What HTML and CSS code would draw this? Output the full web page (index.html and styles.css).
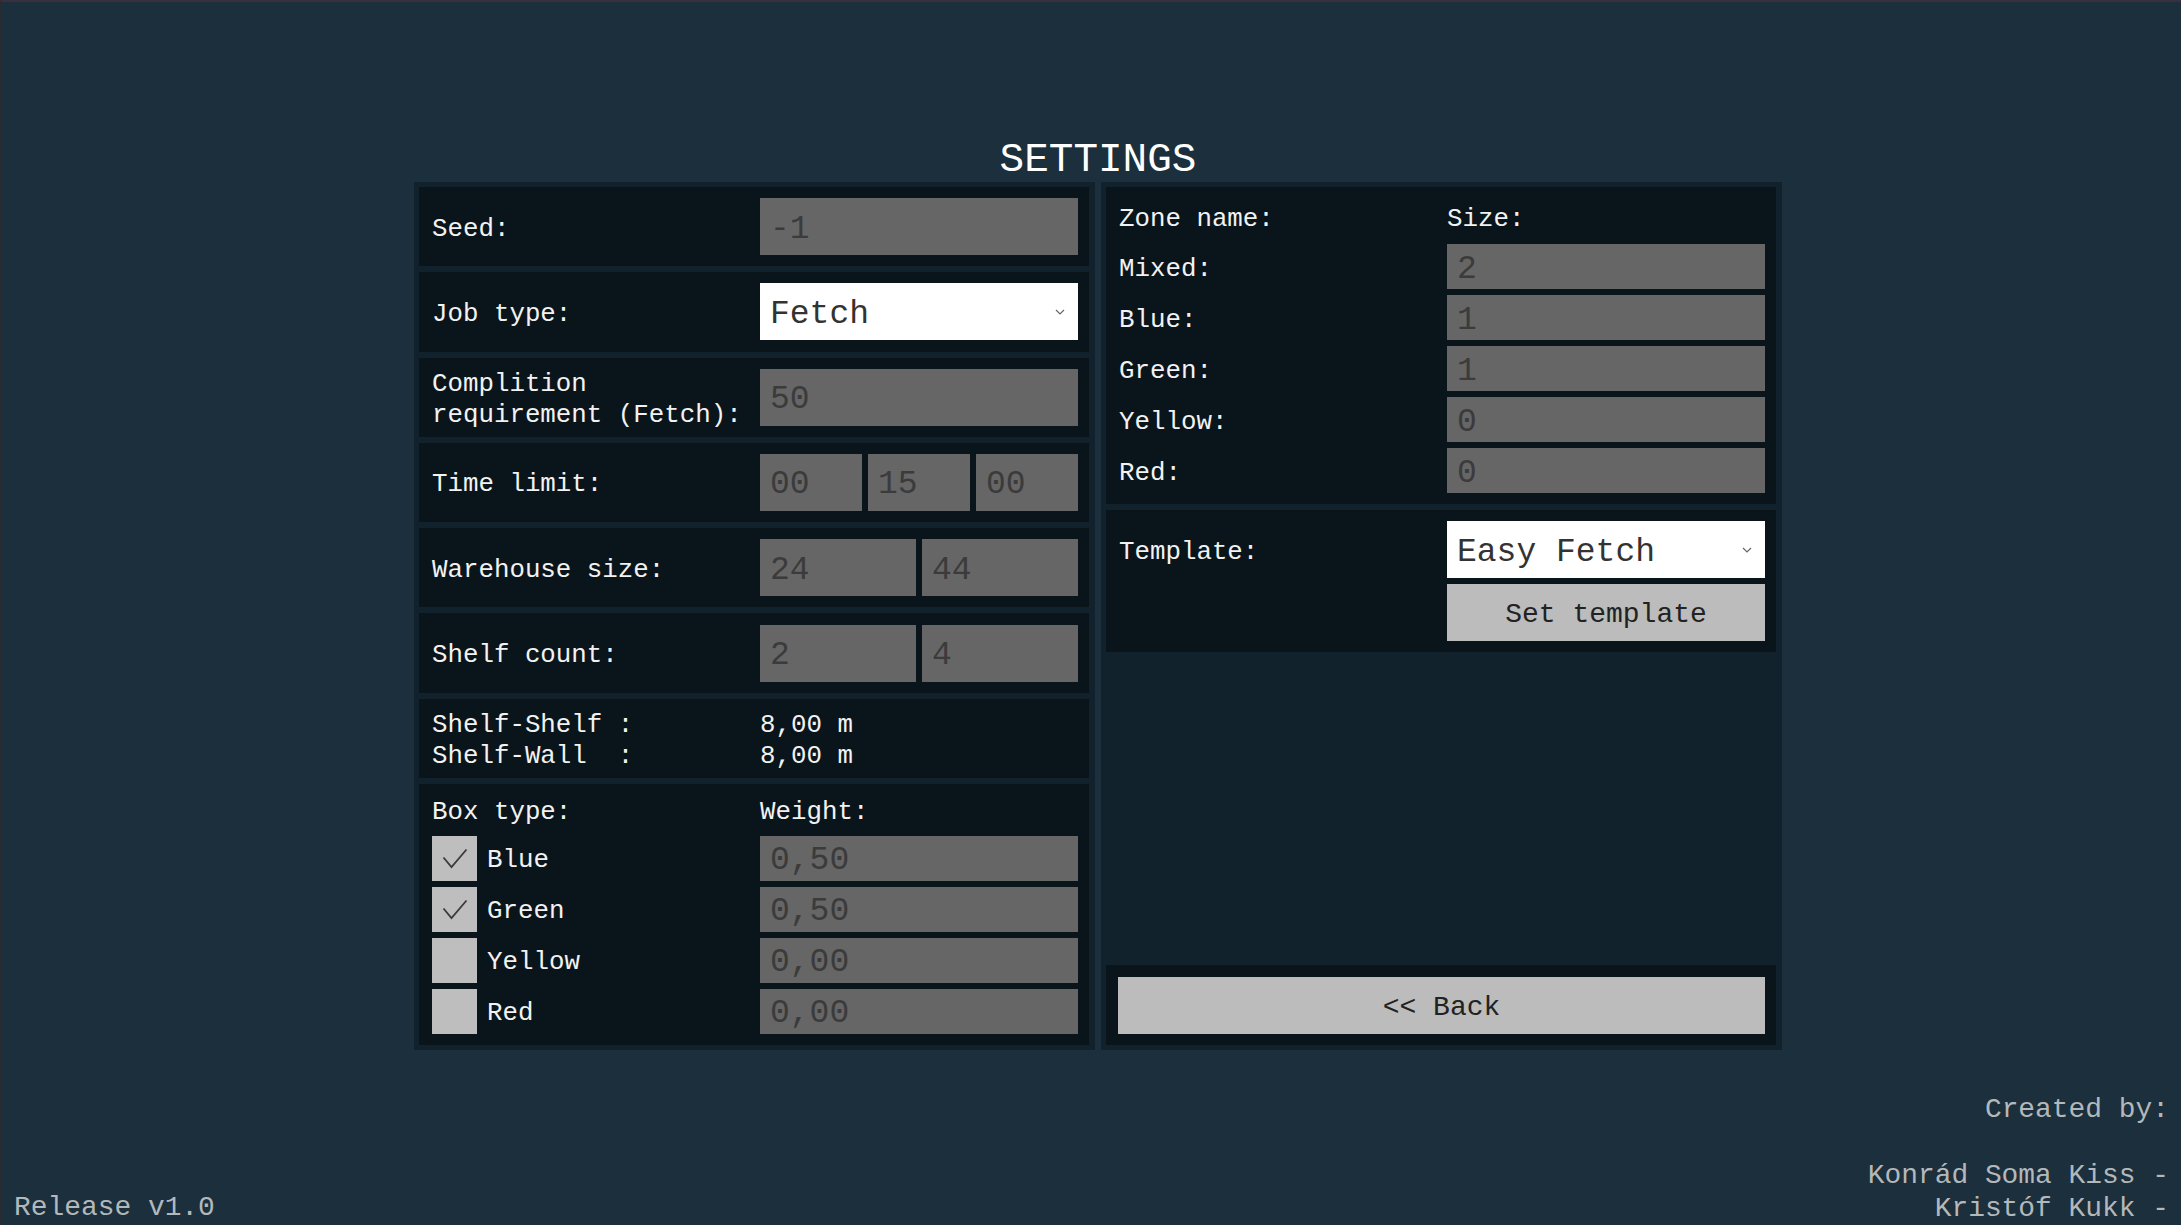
FILE: index.html
```html
<!DOCTYPE html>
<html lang="en">
<head>
<meta charset="utf-8">
<title>Settings</title>
<link rel="stylesheet" href="styles.css">
</head>
<body>
<div class="app">
  <div class="settings">
    <h1 class="title">SETTINGS</h1>
    <div class="panels">
      <section class="panel">
        <div class="row">
          <div class="label">Seed:</div>
          <div class="field">-1</div>
        </div>
        <div class="row">
          <div class="label">Job type:</div>
          <div class="select"><span>Fetch</span><svg class="chev" viewBox="0 0 10 6" width="10" height="6"><path d="M1 1 L5 5 L9 1"/></svg></div>
        </div>
        <div class="row">
          <div class="label">Complition
requirement (Fetch):</div>
          <div class="field">50</div>
        </div>
        <div class="row">
          <div class="label">Time limit:</div>
          <div class="fields">
            <div class="field">00</div>
            <div class="field">15</div>
            <div class="field">00</div>
          </div>
        </div>
        <div class="row">
          <div class="label">Warehouse size:</div>
          <div class="fields">
            <div class="field">24</div>
            <div class="field">44</div>
          </div>
        </div>
        <div class="row">
          <div class="label">Shelf count:</div>
          <div class="fields">
            <div class="field">2</div>
            <div class="field">4</div>
          </div>
        </div>
        <div class="row">
          <div class="label">Shelf-Shelf :
Shelf-Wall  :</div>
          <div class="label">8,00 m
8,00 m</div>
        </div>
        <div class="row-box">
          <div class="label">Box type:</div>
          <div class="label">Weight:</div>
          <div class="check"><div class="box"><svg viewBox="0 0 45 45" width="45" height="45"><path d="M11.5 21.5 L19.5 31 L34.5 13.5"/></svg></div><span class="label">Blue</span></div>
          <div class="field">0,50</div>
          <div class="check"><div class="box"><svg viewBox="0 0 45 45" width="45" height="45"><path d="M11.5 21.5 L19.5 31 L34.5 13.5"/></svg></div><span class="label">Green</span></div>
          <div class="field">0,50</div>
          <div class="check"><div class="box"></div><span class="label">Yellow</span></div>
          <div class="field">0,00</div>
          <div class="check"><div class="box"></div><span class="label">Red</span></div>
          <div class="field">0,00</div>
        </div>
      </section>
      <section class="panel">
        <div class="row-zone">
          <div class="label">Zone name:</div>
          <div class="label">Size:</div>
          <div class="label">Mixed:</div>
          <div class="field sm">2</div>
          <div class="label">Blue:</div>
          <div class="field sm">1</div>
          <div class="label">Green:</div>
          <div class="field sm">1</div>
          <div class="label">Yellow:</div>
          <div class="field sm">0</div>
          <div class="label">Red:</div>
          <div class="field sm">0</div>
        </div>
        <div class="row-template">
          <div class="label">Template:</div>
          <div class="select"><span>Easy Fetch</span><svg class="chev" viewBox="0 0 10 6" width="10" height="6"><path d="M1 1 L5 5 L9 1"/></svg></div>
          <div></div>
          <div class="button">Set template</div>
        </div>
        <div class="spacer"></div>
        <div class="row-back">
          <div class="button">&lt;&lt; Back</div>
        </div>
      </section>
    </div>
  </div>
  <footer class="footer">
    <div class="release">Release v1.0</div>
    <div class="credits">Created by:

Konrád Soma Kiss -
Kristóf Kukk -</div>
  </footer>
</div>
</body>
</html>
```

FILE: styles.css
```css
html, body {
  margin: 0;
  padding: 0;
  background: #1b2f3c;
}

.app {
  height: 1225px;
  box-sizing: border-box;
  border-top: 2px solid #3a2f3e;
  border-left: 2px solid #2a2b30;
  background: #1b2f3c;
  display: flex;
  flex-direction: column;
  font-family: "Liberation Mono", "DejaVu Sans Mono", monospace;
  overflow: hidden;
}

.settings {
  margin-left: 412px;
  width: 1368px;
  padding-top: 136px;
}

.title {
  margin: 0;
  text-align: center;
  font-size: 41px;
  line-height: 44px;
  font-weight: normal;
  color: #ffffff;
}

.panels {
  display: flex;
  gap: 6px;
}

.panel {
  width: 681px;
  height: 868px;
  box-sizing: border-box;
  padding: 5px 6px 5px 5px;
  background: #11222c;
  display: flex;
  flex-direction: column;
  gap: 6px;
}

.row {
  flex: 1 1 0;
  background: #0a151b;
  display: grid;
  grid-template-columns: 328px 318px;
  align-items: center;
  padding: 0 11px 0 13px;
}

.label {
  color: #f2f2f2;
  font-size: 25.8px;
  line-height: 31px;
  white-space: pre;
  padding-top: 5px;
}

.field {
  height: 57px;
  box-sizing: border-box;
  background: #666666;
  color: #3b3b3b;
  font-size: 33px;
  display: flex;
  align-items: center;
  padding: 5px 0 0 10px;
}

.field.sm {
  height: 45px;
}

.fields {
  display: flex;
  gap: 6px;
}

.fields .field {
  flex: 1 1 0;
}

.select {
  height: 57px;
  box-sizing: border-box;
  background: #ffffff;
  color: #333333;
  font-size: 33px;
  display: flex;
  align-items: center;
  justify-content: space-between;
  padding: 0 13px 0 10px;
}

.select span {
  padding-top: 5px;
}

.chev path {
  fill: none;
  stroke: #666666;
  stroke-width: 1.2;
}

.row-box {
  flex: none;
  height: 261px;
  box-sizing: border-box;
  background: #0a151b;
  padding: 6px 11px 11px 13px;
  display: grid;
  grid-template-columns: 328px 318px;
  grid-template-rows: 40px repeat(4, 45px);
  row-gap: 6px;
  align-items: center;
}

.row-box .field {
  height: 45px;
}

.check {
  display: flex;
  align-items: center;
  gap: 10px;
}

.box {
  width: 45px;
  height: 45px;
  background: #bdbebd;
}

.box svg {
  display: block;
}

.box path {
  fill: none;
  stroke: #3a3a3a;
  stroke-width: 1.8;
}

.row-zone {
  flex: none;
  height: 317px;
  box-sizing: border-box;
  background: #0a151b;
  padding: 8px 11px 11px 13px;
  display: grid;
  grid-template-columns: 328px 318px;
  grid-template-rows: 43px repeat(5, 45px);
  row-gap: 6px;
  align-items: center;
}

.row-template {
  flex: none;
  height: 142px;
  box-sizing: border-box;
  background: #0a151b;
  padding: 11px 11px 11px 13px;
  display: grid;
  grid-template-columns: 328px 318px;
  grid-template-rows: 57px 57px;
  row-gap: 6px;
  align-items: center;
}

.button {
  height: 57px;
  box-sizing: border-box;
  padding-top: 4px;
  background: #bbbcbb;
  color: #222222;
  font-size: 28px;
  display: flex;
  align-items: center;
  justify-content: center;
}

.spacer {
  flex: 1 1 0;
}

.row-back {
  flex: none;
  height: 80px;
  box-sizing: border-box;
  background: #0a151b;
  padding: 0 11px 0 12px;
  display: flex;
  flex-direction: column;
  justify-content: center;
}

.footer {
  margin-top: auto;
  display: flex;
  justify-content: space-between;
  align-items: flex-end;
  color: #b3b8bb;
  font-size: 27.9px;
  line-height: 33px;
  padding: 0 12px 0 12px;
}

.release {
  padding-bottom: 1px;
}

.credits {
  text-align: right;
  white-space: pre;
}
```
